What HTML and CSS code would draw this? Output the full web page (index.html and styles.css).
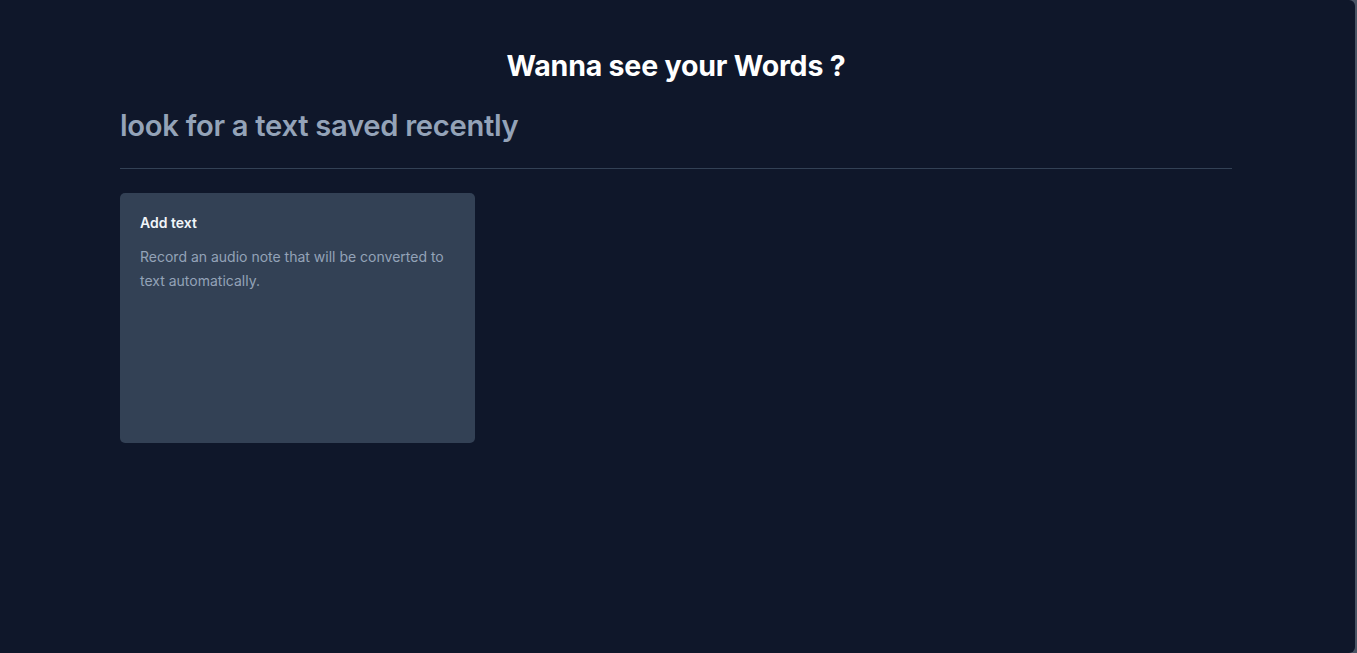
FILE: index.html
```html
<!DOCTYPE html>
<html lang="en">
<head>
<meta charset="utf-8">
<title>Words</title>
<link rel="stylesheet" href="styles.css">
</head>
<body>
<div class="frame">
  <main class="page">
    <h1 class="title">Wanna see your Words ?</h1>
    <section class="content">
      <h2 class="subtitle">look for a text saved recently</h2>
      <hr class="divider">
      <div class="grid">
        <article class="card">
          <h3 class="card-title">Add text</h3>
          <p class="card-text">Record an audio note that will be converted to text automatically.</p>
        </article>
      </div>
    </section>
  </main>
</div>
</body>
</html>
```
FILE: styles.css
```css
html, body {
  margin: 0;
  padding: 0;
  height: 100%;
}
body {
  background: #4a5565;
  font-family: Inter, "Noto Sans", sans-serif;
}
.frame {
  height: 100%;
  padding-right: 2px;
  box-sizing: border-box;
}
.page {
  height: 100%;
  background: #0f172a;
  border-radius: 0 6px 6px 0;
  padding-top: 48px;
  padding-right: 3px;
  box-sizing: border-box;
}
.title {
  margin: 0;
  text-align: center;
  color: #ffffff;
  font-size: 28.5px;
  font-weight: 700;
  line-height: 36px;
  letter-spacing: -0.2px;
}
.content {
  margin: 0 auto;
  width: 1112px;
  padding-top: 22px;
}
.subtitle {
  margin: 0;
  color: #94a3b8;
  font-size: 29.2px;
  font-weight: 600;
  line-height: 40px;
  letter-spacing: -0.3px;
}
.divider {
  margin: 22px 0 0 0;
  border: 0;
  border-top: 1px solid #334155;
  height: 0;
}
.grid {
  display: grid;
  grid-template-columns: repeat(3, 355px);
  gap: 24px;
  margin-top: 24px;
}
.card {
  background: #334155;
  border-radius: 5px;
  height: 250px;
  padding: 20px;
  box-sizing: border-box;
}
.card-title {
  margin: 0;
  color: #f1f5f9;
  font-size: 14px;
  font-weight: 600;
  line-height: 20px;
}
.card-text {
  margin: 12px 0 0 0;
  color: #94a3b8;
  font-size: 14px;
  line-height: 24px;
}
```
